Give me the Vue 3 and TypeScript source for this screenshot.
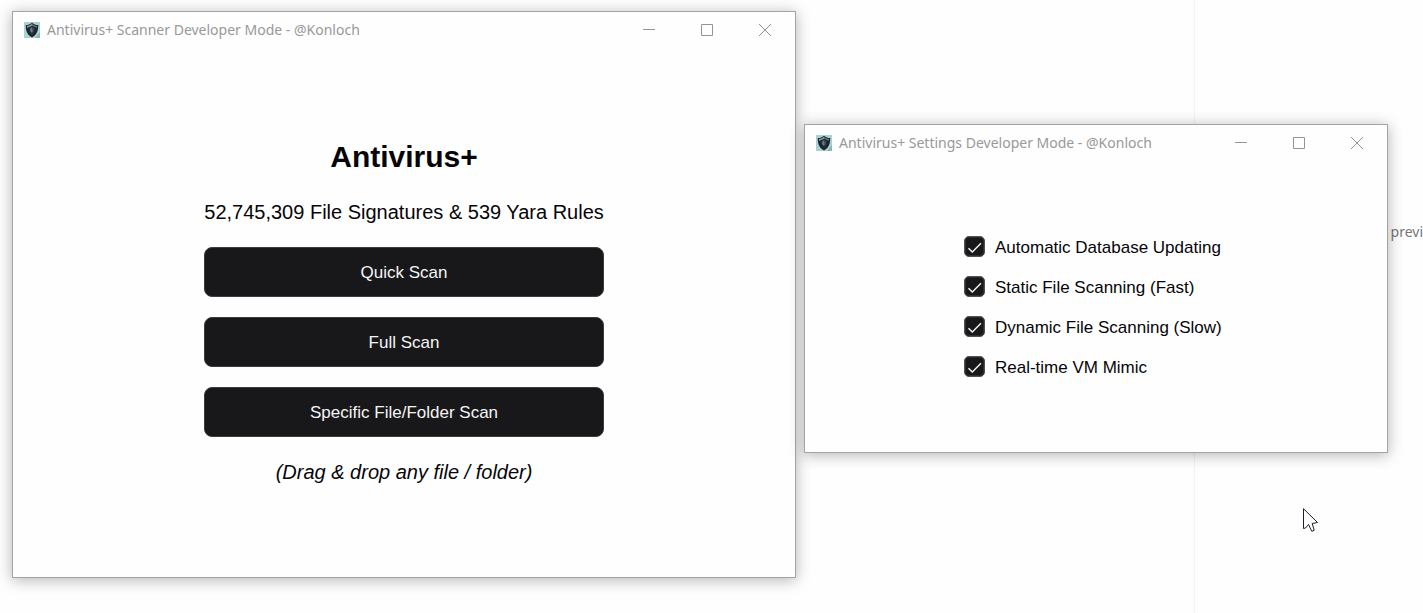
<script setup lang="ts">
import { ref } from 'vue'

interface AppWindow {
  id: string
  title: string
}

interface Setting {
  id: string
  label: string
  enabled: boolean
}

const windows: AppWindow[] = [
  { id: 'scanner', title: 'Antivirus+ Scanner Developer Mode - @Konloch' },
  { id: 'settings', title: 'Antivirus+ Settings Developer Mode - @Konloch' },
]

const scans: string[] = ['Quick Scan', 'Full Scan', 'Specific File/Folder Scan']

const settings = ref<Setting[]>([
  { id: 'auto-update', label: 'Automatic Database Updating', enabled: true },
  { id: 'static-scan', label: 'Static File Scanning (Fast)', enabled: true },
  { id: 'dynamic-scan', label: 'Dynamic File Scanning (Slow)', enabled: true },
  { id: 'vm-mimic', label: 'Real-time VM Mimic', enabled: true },
])
</script>

<template>
  <div class="desktop">
    <div class="backdrop-pane"></div>
    <span class="backdrop-text">previ</span>

    <section v-for="win in windows" :key="win.id" class="window" :class="win.id" :aria-label="win.title">
      <header class="titlebar">
        <svg class="app-icon" viewBox="0 0 16 16" aria-hidden="true">
          <rect width="16" height="16" fill="#a9d3d3" />
          <path d="M11 16 16 10V16Z" fill="#8fb3b3" />
          <path d="M8 .8C6.200 2.400 4 3 1.800 3.100 1.700 8.500 3 13 8 15.400 13 13 14.300 8.500 14.200 3.100 12 3 9.800 2.400 8 .8Z" fill="#1b222b" />
          <path d="M8 1.800C6.500 3 4.800 3.600 2.900 3.900L3 6 8 4Z" fill="#8b969e" />
          <path d="M8 1.800C9.500 3 11.200 3.600 13.100 3.900L13 6 8 4Z" fill="#5e6973" />
          <path d="M8 4.200 4.300 5.600C4.300 9 5.500 11.800 8 13.400 10.500 11.800 11.700 9 11.700 5.600Z" fill="#252d38" />
          <path d="M8 5.200 6.200 6.400V9.200L8 11Z" fill="#5f7c90" />
          <path d="M8 5.200 9.800 6.400V9.200L8 11Z" fill="#42566b" />
        </svg>
        <span class="title">{{ win.title }}</span>
        <div class="controls">
          <button type="button" aria-label="Minimize">
            <svg viewBox="0 0 12 12"><path d="M0 5.500H12" /></svg>
          </button>
          <button type="button" aria-label="Maximize">
            <svg viewBox="0 0 12 12"><path d="M.5.5H11.500V11.500H.5Z" /></svg>
          </button>
          <button type="button" aria-label="Close">
            <svg viewBox="0 0 12 12"><path d="M0 0 12 12M12 0 0 12" /></svg>
          </button>
        </div>
      </header>

      <main v-if="win.id === 'scanner'" class="scan-body">
        <h1>Antivirus+</h1>
        <p class="summary">52,745,309 File Signatures &amp; 539 Yara Rules</p>
        <div class="scan-list">
          <button v-for="scan in scans" :key="scan" type="button" class="scan-button">{{ scan }}</button>
        </div>
        <p class="hint">(Drag &amp; drop any file / folder)</p>
      </main>

      <form v-else class="settings-body">
        <div class="setting-list">
          <label v-for="item in settings" :key="item.id" class="setting" :for="item.id">
            <span class="box">
              <input :id="item.id" v-model="item.enabled" type="checkbox" />
              <svg v-if="item.enabled" viewBox="0 0 21 21" aria-hidden="true">
                <path d="M4.500 12.200 8.300 16 17 7.300" />
              </svg>
            </span>
            <span>{{ item.label }}</span>
          </label>
        </div>
      </form>
    </section>

    <svg class="cursor" viewBox="0 0 16 25" aria-hidden="true">
      <path d="M.5.700V20.500L2.500 20 5.500 16.500 8.800 23.300 11.200 22.300 9.200 15.500 14.500 14.500Z" />
    </svg>
  </div>
</template>

<style>
body {
  margin: 0;
}
</style>

<style scoped>
.desktop {
  position: relative;
  min-height: 100vh;
  overflow: hidden;
  background: #fefefe;
  color: #050508;
  font-family: "Liberation Sans", Arial, sans-serif;
}

.backdrop-pane {
  position: absolute;
  top: 0;
  right: 0;
  bottom: 0;
  width: 228px;
  border-left: 1px solid #f3f3f3;
}

.backdrop-text {
  position: absolute;
  top: 222px;
  right: 0;
  color: #777;
  font: 14px/20px "Noto Sans", sans-serif;
}

.window {
  position: absolute;
  box-sizing: border-box;
  border: 1px solid #a3a3a3;
  background: #fefefe;
  box-shadow: 0 2px 14px rgba(0, 0, 0, 0.3);
}

.scanner {
  top: 11px;
  left: 12px;
  width: 55.1%;
}

.settings {
  top: 124px;
  right: 35px;
  width: 41.04%;
}

.titlebar {
  display: flex;
  align-items: center;
  height: 36px;
  padding: 0 1px 0 11px;
}

.app-icon {
  flex: none;
  width: 16px;
  height: 16px;
}

.title {
  flex: 1;
  margin-left: 7px;
  color: #999;
  font: 14px/20px "Noto Sans", sans-serif;
  white-space: nowrap;
}

.controls {
  display: flex;
}

.controls button {
  display: grid;
  place-items: center;
  width: 58px;
  height: 36px;
  padding: 0;
  border: 0;
  background: none;
}

.controls svg {
  width: 12px;
  height: 12px;
  fill: none;
  stroke: #949494;
}

.scan-body {
  display: flex;
  flex-direction: column;
  align-items: center;
  padding: 90px 16px 93px;
}

h1 {
  margin: 0 0 24px;
  font-size: 30px;
  line-height: 38px;
}

.summary,
.hint {
  margin: 0;
  font-size: 20px;
  line-height: 24px;
}

.hint {
  font-style: italic;
}

.scan-list {
  display: grid;
  gap: 20px;
  width: 400px;
  max-width: 100%;
  margin: 23px 0;
}

.scan-button {
  height: 50px;
  padding: 2px 8px 0;
  border: 1px solid #3c3c3f;
  border-radius: 8px;
  background: #18181a;
  color: #f4f4f4;
  font: 17px/20px "Liberation Sans", Arial, sans-serif;
}

.settings-body {
  display: flex;
  justify-content: center;
  padding: 75px 16px;
}

.setting-list {
  display: grid;
  gap: 19px;
  min-width: 264px;
}

.setting {
  display: flex;
  align-items: flex-start;
  gap: 10px;
  height: 21px;
  font-size: 17px;
  line-height: 23px;
}

.box {
  display: grid;
  width: 21px;
  height: 21px;
}

.box input,
.box svg {
  grid-area: 1 / 1;
  width: 21px;
  height: 21px;
  margin: 0;
}

.box input {
  appearance: none;
  box-sizing: border-box;
  border: 1px solid #505052;
  border-radius: 5px;
  background: #18181a;
  box-shadow: inset 0 0 0 1px #2c2c2e;
}

.box svg {
  fill: none;
  stroke: #f2f2f2;
  stroke-width: 1.500;
  pointer-events: none;
}

.cursor {
  position: absolute;
  top: 508px;
  right: 104px;
  width: 16px;
  height: 25px;
  fill: #fff;
  stroke: #1c1c2a;
  stroke-width: 1;
}
</style>
